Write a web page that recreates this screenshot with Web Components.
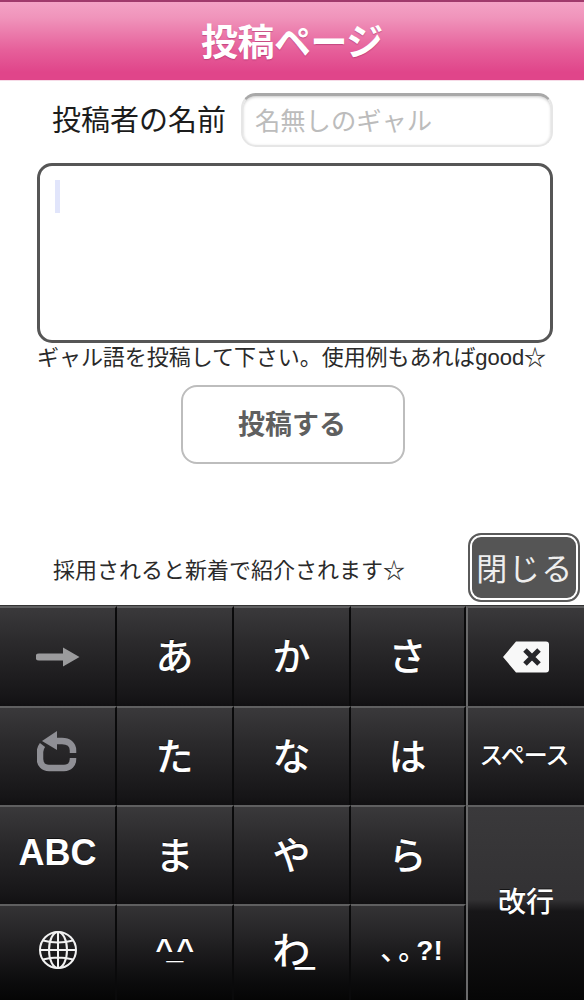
<!DOCTYPE html>
<html lang="ja"><head><meta charset="utf-8"><title>投稿ページ</title>
<style>html,body{margin:0;padding:0;background:#fff}body{width:584px;height:1000px;overflow:hidden;font-family:"Noto Sans CJK JP","Liberation Sans",sans-serif}</style>
</head><body>
<post-page>
  <page-header>投稿ページ</page-header>
  <post-form></post-form>
  <ime-keyboard></ime-keyboard>
</post-page>
<script>
const FONT='"Noto Sans CJK JP","Liberation Sans",sans-serif';
function def(name,css,html){
  customElements.define(name,class extends HTMLElement{
    constructor(){super();this.attachShadow({mode:'open'}).innerHTML=`<style>${css}</style>${html}`;}
  });
}
def('post-page',`:host{display:flex;flex-direction:column;width:584px;height:1000px;font-family:${FONT}}`,`<slot></slot>`);
def('page-header',`:host{display:flex;align-items:center;justify-content:center;box-sizing:border-box;height:81px;padding-bottom:2px;
  border-top:2px solid #a03a6c;border-bottom:1px solid #f6dbe7;
  background:linear-gradient(#f4a2c5 0,#f094bb 20%,#e65f9a 62%,#e0458a 90%,#e0458a 100%);
  color:#fff;font-size:37px;font-weight:700;letter-spacing:-.5px;text-shadow:0 1px 1px rgba(150,30,90,.45)}`,`<slot></slot>`);
def('post-form',`:host{display:flex;flex-direction:column;box-sizing:border-box;height:524px;padding:12px 31px 3px 37px;color:#222}
  .name{display:flex;align-items:center;height:54px}
  .lbl{margin-left:15px;width:189px;font-size:29px;line-height:40px;padding-bottom:4px;white-space:nowrap;color:#1c1c1c}
  .inp{flex:1;height:54px;box-sizing:border-box;border-radius:15px;border:2px solid #e6e6e6;border-top:3px solid #a8a8a8;
    box-shadow:inset 0 1px 3px rgba(0,0,0,.22);display:flex;align-items:center;padding:0 0 4px 12px;color:#bcbcbc;font-size:25.3px;white-space:nowrap}
  .area{margin-top:16px;height:180px;box-sizing:border-box;border:3px solid #565656;border-radius:15px;padding:14px 15px;background:#fff;flex:none}
  .caret{width:5px;height:33px;background:#e1e5fb}
  .hint{font-family:"Liberation Sans","Noto Sans CJK JP",sans-serif;font-size:22px;line-height:30px;height:34px;white-space:nowrap;letter-spacing:-.05px;color:#2a2a2a}
  .submit{align-self:flex-start;margin:8px 0 0 144px;width:224px;height:79px;box-sizing:border-box;border:2px solid #bdbdbd;border-radius:16px;background:#fff;
    display:flex;align-items:center;justify-content:center;padding:0 2px 4px 0;color:#5f5f5f;font-size:27px;font-weight:700}
  .foot{margin-top:auto;display:flex;align-items:center}
  .note{margin-left:16px;flex:1;font-size:22px;white-space:nowrap;color:#2a2a2a;line-height:30px}
  .close{width:112px;height:69px;box-sizing:border-box;border:2px solid #5a5a5a;border-radius:13px;background:#555;box-shadow:inset 0 0 0 2px #fff;
    display:flex;align-items:center;justify-content:center;padding:0 0 2px 2px;color:#eee;font-size:31px;letter-spacing:1.5px;margin-right:-27px}`,
`<div class="name"><span class="lbl">投稿者の名前</span><div class="inp">名無しのギャル</div></div>
<div class="area"><div class="caret"></div></div>
<div class="hint">ギャル語を投稿して下さい。使用例もあればgood☆</div>
<div class="submit">投稿する</div>
<div class="foot"><span class="note">採用されると新着で紹介されます☆</span><div class="close">閉じる</div></div>`);
def('kb-key',`:host{display:flex;align-items:center;justify-content:center;position:relative;box-sizing:border-box;min-width:0;min-height:0;
  padding-bottom:6px;color:#fff;font-size:38px;font-weight:500;line-height:1;white-space:nowrap;
  border-top:2px solid #5f5f60;border-right:2px solid #0a0a0b;
  background:linear-gradient(#3a393b,#2b2a2c 35%,#161517 92%,#111012);text-shadow:0 -1px 0 rgba(0,0,0,.6)}
  :host([fn]){border-right:0}
  :host([lastcol]){border-left:2px solid #6a6a6b;}
  :host([low]){background:linear-gradient(#343335,#232224 35%,#0c0c0d 80%,#050505);}
  :host([wide]){background:linear-gradient(#3a393b,#323133 48%,#171618 54%,#060606 100%);}`,`<slot></slot>`);
def('ime-keyboard',`:host{display:grid;flex:none;height:395px;width:584px;background:#000;border-top:1px solid #333;box-sizing:border-box;
  grid-template-columns:117px 117px 117px 115px 118px;grid-template-rows:100px 99px 99px 96px}
  svg{display:block;margin-top:6px}
  svg.undo{margin:0 0 4px}
  svg.globe{margin:0}
  .abc{font-family:"Liberation Sans",sans-serif;font-weight:700;font-size:36px;padding-bottom:5px}
  .sp{font-size:24px;letter-spacing:-1px;padding-right:4px}
  .ret{grid-row:3/span 2;grid-column:5;font-size:28px;padding-bottom:8px}
  .face{font-family:"Liberation Sans",sans-serif;font-weight:700;font-size:30px;letter-spacing:-6.5px;padding:0 6px 8px 0}
  .wa{letter-spacing:-16px;padding:0 11px 10px 0}
  .pun{font-family:"Liberation Sans","Noto Sans CJK JP",sans-serif;font-size:28px;font-weight:700;padding:0 0 4px 8px;text-spacing-trim:space-all}
  .pun span{letter-spacing:-10px;font-weight:500}`,
`<kb-key><svg width="44" height="20" viewBox="0 0 44 20"><path d="M3 6.500h24V0.500L43.500 10 27 19.500V13.500H3a3.500 3.500 0 0 1 0-7z" fill="#9b9b9d"/></svg></kb-key>
<kb-key>あ</kb-key><kb-key>か</kb-key><kb-key>さ</kb-key>
<kb-key fn lastcol><svg width="46" height="32" viewBox="0 0 46 32"><path d="M13 .5H43a3 3 0 0 1 3 3V28.500a3 3 0 0 1-3 3H13L0 16z" fill="#f8f8f8"/><path d="M22 9l14 14M36 9L22 23" stroke="#26262a" stroke-width="5" fill="none"/></svg></kb-key>
<kb-key><svg class="undo" width="41" height="41" viewBox="0 0 41 41"><path d="M18 10h7c6.500 0 11 3.500 11 9.500v2.500M36 27v1c0 5.500-3.500 9-9 9H12c-5.500 0-9-3.500-9-9v-7c0-3 1-5 2.500-7" fill="none" stroke="#8f8f95" stroke-width="6.500"/><path d="M5 10L20 0v19z" fill="#8f8f95"/></svg></kb-key>
<kb-key>た</kb-key><kb-key>な</kb-key><kb-key>は</kb-key>
<kb-key fn lastcol class="sp">スペース</kb-key>
<kb-key class="abc">ABC</kb-key><kb-key>ま</kb-key><kb-key>や</kb-key><kb-key>ら</kb-key>
<kb-key fn lastcol wide class="ret">改行</kb-key>
<kb-key low><svg class="globe" width="40" height="40" viewBox="0 0 40 40" fill="none" stroke="#f2f2f2" stroke-width="2"><circle cx="20" cy="20" r="18"/><ellipse cx="20" cy="20" rx="9" ry="18"/><path d="M20 2v36M2 20h36M5 10.500c9 2.500 21 2.500 30 0M5 29.500c9-2.500 21-2.500 30 0"/></svg></kb-key>
<kb-key low class="face">^_^</kb-key>
<kb-key low class="wa">わ_</kb-key>
<kb-key low class="pun"><span>、。</span>?!</kb-key>`);
</script>
</body></html>
